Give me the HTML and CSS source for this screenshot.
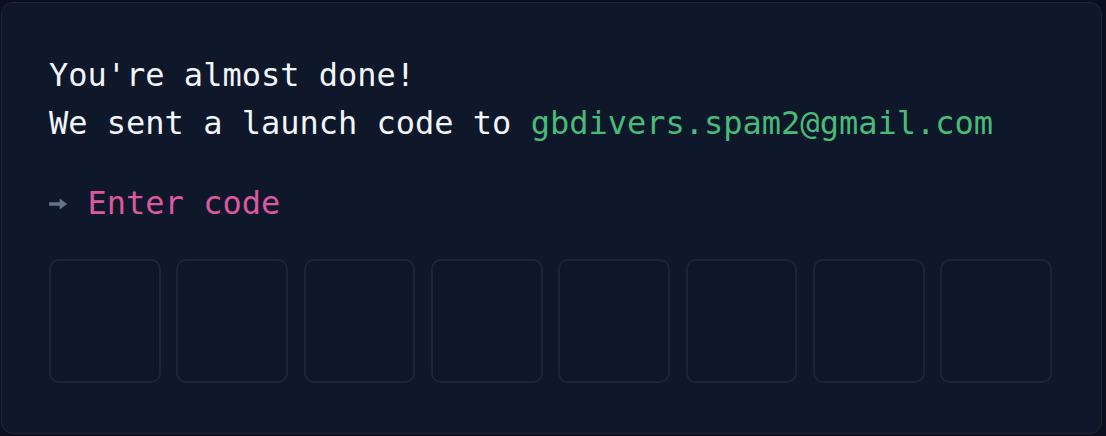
FILE: index.html
```html
<!DOCTYPE html>
<html>
<head>
<meta charset="utf-8">
<link rel="stylesheet" href="styles.css">
</head>
<body>
<div class="card">
  <p class="msg">You're almost done!<br>We sent a launch code to <span class="email">gbdivers.spam2@gmail.com</span></p>
  <p class="prompt"><svg class="arrow" width="19" height="12" viewBox="0 0 19 12" aria-label="→"><path d="M0 4.2H10.5V0.6L18 6L10.5 11.4V7.8H0Z" fill="#64748b"/></svg> <span class="label">Enter code</span></p>
  <div class="code">
    <div class="box"></div><div class="box"></div><div class="box"></div><div class="box"></div>
    <div class="box"></div><div class="box"></div><div class="box"></div><div class="box"></div>
  </div>
</div>
</body>
</html>
```
FILE: styles.css
```css
html, body {
  margin: 0;
  background: #0a1020;
}
body {
  padding: 2px 4px 4px 1px;
  font-family: "DejaVu Sans Mono", "Liberation Mono", monospace;
  font-size: 32px;
  line-height: 48px;
  color: #f1f5f9;
}
.card {
  background: #0f172a;
  border: 1px solid #1e2738;
  border-radius: 12px;
  padding: 48px 49px 48px 47px;
  height: 334px;
}
.msg, .prompt {
  margin: 0;
}
.email { color: #48bb78; }
.prompt { margin-top: 32px; }
.arrow {
  display: inline-block;
  width: 19.27px;
  vertical-align: 4px;
}
.label { color: #dc599f; }
.code {
  margin-top: 32px;
  display: grid;
  grid-template-columns: repeat(8, 1fr);
  gap: 15.5px;
}
.box {
  height: 120px;
  border: 2px solid #1d2535;
  border-radius: 10px;
  background: #0e1628;
}
```
